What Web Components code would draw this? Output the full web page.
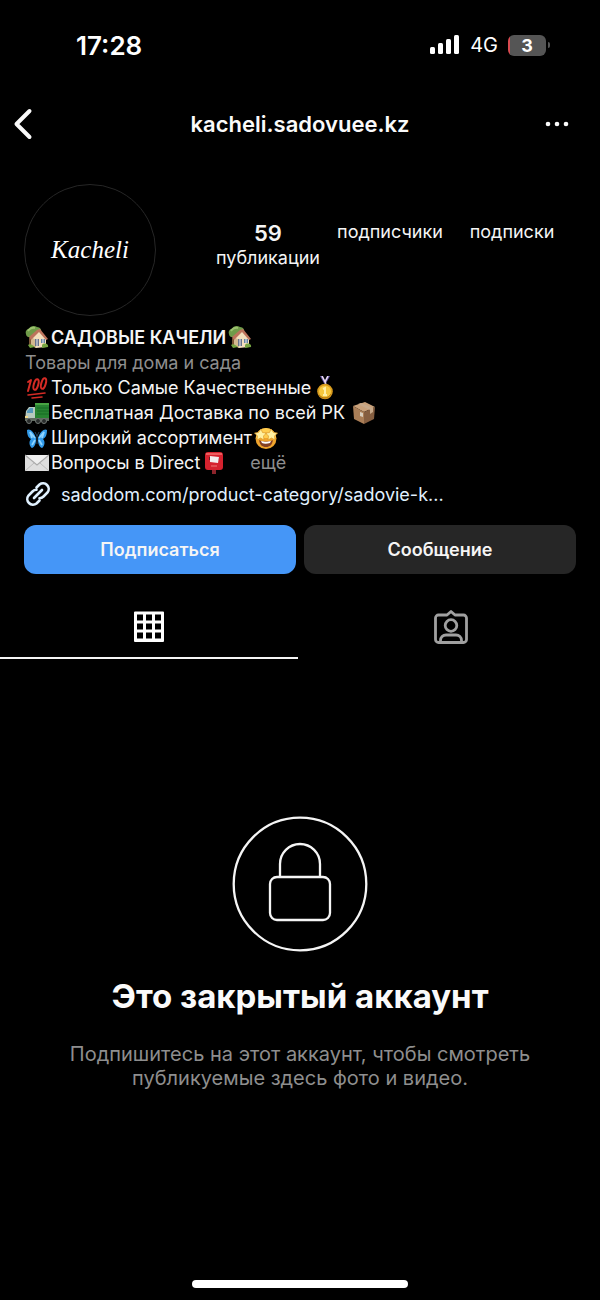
<!DOCTYPE html>
<html lang="ru">
<head>
<meta charset="utf-8">
<meta name="viewport" content="width=device-width, initial-scale=1">
<title>kacheli.sadovuee.kz</title>
<style>
  html { background: #000; }
  body { margin: 0; background: #000; color: #f5f5f5; font-family: Inter, "Noto Sans", sans-serif; font-size: 18px; line-height: 25px; }
</style>
</head>
<body>
<profile-screen></profile-screen>

<script>
const define = (name, html) => {
  const tpl = document.createElement('template');
  tpl.innerHTML = html;
  customElements.define(name, class extends HTMLElement {
    constructor() {
      super();
      this.attachShadow({ mode: 'open' }).append(tpl.content.cloneNode(true));
    }
  });
};

/* Emoji pictograms, each on a 24-unit square */
const EMOJI = {
  house: ['дом с садом', `
    <path d="M4 13h3v8H4z" fill="#7b5636"/>
    <path d="M1 9c-1-3 1-5 3-5 1-3 5-4 8-2 3 0 5 3 4 5 0 3-3 4-5 3-1 2-3 3-5 2-3 1-5-1-5-3z" fill="#6f9b49"/>
    <path d="M3 6c1-2 4-4 7-3" stroke="#9cc16e" stroke-width="2" fill="none"/>
    <path d="M6 12l8-6 7 7v9l-10 1-5-3z" fill="#f3dfbd"/>
    <path d="M6 12l5 3v8l-5-3z" fill="#d4b98f"/>
    <path d="M4 12l8-7 3-1 8 10-2 1-7-8-8 8z" fill="#bd735c"/>
    <path d="M10 14h4v7h-4z" fill="#68738b"/><path d="M16 14h4v4h-4z" fill="#6684a4"/>
    <path d="M12 14v7M18 14v4" stroke="#eee" stroke-width="1"/>
    <path d="M3 20c2-2 5 0 7 2l-5 1zM17 20c2-3 7-1 6 2l-6 1z" fill="#76a542"/>`],
  hundred: ['100', `
    <g fill="none" stroke="#d52b25" stroke-linecap="round" stroke-linejoin="round">
    <path d="M3 6l3-2-3 11" stroke-width="2"/>
    <ellipse cx="11" cy="8.500" rx="2.200" ry="5.500" transform="rotate(16 11 8.500)" stroke-width="2"/>
    <ellipse cx="18.500" cy="7.500" rx="2.200" ry="5.500" transform="rotate(16 18.500 7.500)" stroke-width="2"/>
    <path d="M3 19l17-2M7 22l10-1" stroke-width="1.600"/></g>`],
  medal: ['золотая медаль', `
    <path d="M7 0l5 9 5-9h-3l-2 4-2-4z" fill="#6a58ad"/><path d="M9 0l4 8M15 0l-3 6" stroke="#eee1ec" stroke-width="1.400"/>
    <circle cx="12" cy="15.500" r="7.800" fill="#d89b1e"/><circle cx="12" cy="15.500" r="6" fill="#f7c83e"/>
    <path d="M10 13l2-1v7M10 19h4" stroke="#fff0a6" stroke-width="2" fill="none"/>
    <path d="M6 19c3 4 9 4 12-1" stroke="#b77912" fill="none"/>`],
  truck: ['грузовик', `
    <path d="M10 2h14v16H10z" fill="#278331"/><path d="M10 2h14v2H10z" fill="#48a443"/>
    <path d="M12 7h12M12 10h12M12 13h12" stroke="#176a25"/>
    <path d="M1 10l3-4h6v13H0z" fill="#b7c9bf"/><path d="M2 10l3-3h3v5H2z" fill="#5598bc"/>
    <path d="M0 17h24v3H0z" fill="#5f6a60"/><path d="M0 15h3v2H0z" fill="#f0d78b"/>
    <g fill="#292d2c" stroke="#707672"><circle cx="4" cy="20" r="2.500"/><circle cx="13" cy="20" r="2.500"/><circle cx="19" cy="20" r="2.500"/></g>`],
  package: ['посылка', `
    <path d="M1 5l12-4 10 5-11 5z" fill="#c9a17a"/><path d="M1 5l11 6v12L2 18z" fill="#aa7e57"/>
    <path d="M12 11l11-5-1 12-10 5z" fill="#855e40"/><path d="M6 3l12 6v4l3-2V7L9 2z" fill="#c7a98a"/>
    <path d="M8 11l3 1v4l-3-1z" fill="#d8cdbc"/>`],
  butterfly: ['бабочка', `
    <path d="M11 12C9 5 4 2 2 4c0 6 2 8 4 9-3 3-1 8 1 9 3-1 4-5 4-8z" fill="#319ae9"/>
    <path d="M13 12c2-7 7-10 9-8 0 6-2 8-4 9 3 3 1 8-1 9-3-1-4-5-4-8z" fill="#319ae9"/>
    <path d="M10 12L5 6l2 6M14 12l5-6-2 6M10 14l-3 5M14 14l3 5" stroke="#8ed5ff" stroke-width="1.800" fill="none"/>
    <path d="M12 9v9M12 10l-2-4M12 10l2-4" stroke="#234560" stroke-width="1"/>`],
  star: ['восторг', `
    <circle cx="12" cy="12.500" r="10.500" fill="#f0a52d"/><path d="M2 12a10 10 0 0 1 20 0" fill="#ffce50"/>
    <path d="M7 3l1.500 3.500 4 .5-3 3 .5 4-3.500-2L3 14l.5-4-3-3 4-.5zM17 3l-1.500 3.500-4 .5 3 3-.5 4 3.500-2 3.500 2-.5-4 3-3-4-.5z" fill="#fff0a1" stroke="#dc9927" stroke-width=".7"/>
    <path d="M5 14c4 2 10 2 14 0-1 5-3 7-7 7s-6-2-7-7z" fill="#844023"/><path d="M7 15c4 1 6 1 10 0l-1 2c-3 1-6 1-8 0z" fill="#fff"/>`],
  letter: ['письмо', `
    <path d="M0 4h24v16H0z" fill="#dedede"/><path d="M0 4l12 10L24 4" fill="#efefef" stroke="#aaa" stroke-width="1.200"/>
    <path d="M0 20l9-8M24 20l-9-8" stroke="#bbb" stroke-width="1"/>`],
  postbox: ['почтовый ящик', `
    <path d="M10 17h4v6h-4z" fill="#8c242b"/><rect x="3" y="1" width="18" height="18" rx="3" fill="#d5222e"/>
    <path d="M4 3h16" stroke="#ed5c5d" stroke-width="2"/><path d="M7 6h10v3H7z" fill="#661c25"/>
    <path d="M8 5l9 1-1 6-8-1z" fill="#f3eeee"/><path d="M9 15h6" stroke="#ee7a78" stroke-width="1"/>`]
};

customElements.define('emoji-icon', class extends HTMLElement {
  constructor() {
    super();
    this.attachShadow({ mode: 'open' });
  }
  connectedCallback() {
    const [label, shapes] = EMOJI[this.getAttribute('name')];
    this.shadowRoot.innerHTML = `
      <style>:host{display:block;flex:none;width:24px;height:24px} svg{display:block}</style>
      <svg width="24" height="24" viewBox="0 0 24 24" role="img" aria-label="${label}">${shapes}</svg>`;
  }
});

define('status-bar', `
  <style>
    :host { display: flex; align-items: center; justify-content: space-between; height: 90px; padding: 0 50px 0 76px; color: #fff; }
    time { font-size: 26px; font-weight: 600; }
    .right { display: flex; align-items: center; gap: 10px; font-size: 20px; }
    .battery { display: flex; align-items: center; gap: 2px; }
    .level { width: 38px; height: 21px; border-radius: 6px; background: linear-gradient(90deg, #d84a50 2px, #555 2px); font-size: 18px; line-height: 21px; font-weight: 700; text-align: center; }
    .nub { width: 2px; height: 6px; border-radius: 0 2px 2px 0; background: #555; }
    svg { display: block; }
  </style>
  <time>17:28</time>
  <div class="right">
    <svg width="30" height="20" viewBox="0 0 30 20" fill="#fff" aria-label="Сигнал" role="img">
      <rect y="12" width="5" height="7" rx="1.500"/><rect x="8" y="8" width="5" height="11" rx="1.500"/>
      <rect x="16" y="4" width="5" height="15" rx="1.500"/><rect x="24" width="5" height="19" rx="1.500"/>
    </svg>
    <span>4G</span>
    <div class="battery"><div class="level">3</div><div class="nub"></div></div>
  </div>`);

define('nav-bar', `
  <style>
    :host { display: grid; grid-template-columns: 60px 1fr 60px; align-items: center; height: 68px; color: #fafafa; }
    h1 { margin: 0; font-size: 22px; line-height: 28px; font-weight: 600; text-align: center; }
    button { display: flex; align-items: center; height: 48px; padding: 0; border: 0; background: none; color: inherit; }
    .back { padding-left: 13px; }
    .more { justify-content: flex-end; padding-right: 30px; }
  </style>
  <button class="back" aria-label="Назад"><svg width="20" height="32" viewBox="0 0 20 32" fill="none" stroke="currentColor" stroke-width="4" stroke-linecap="round" stroke-linejoin="round"><path d="M16.500 3L3.500 16l13 13"/></svg></button>
  <h1><slot></slot></h1>
  <button class="more" aria-label="Ещё"><svg width="26" height="6" viewBox="0 0 26 6" fill="currentColor"><circle cx="4" cy="3" r="2.300"/><circle cx="13" cy="3" r="2.300"/><circle cx="22" cy="3" r="2.300"/></svg></button>`);

define('profile-avatar', `
  <style>
    :host { display: flex; flex: none; align-items: center; justify-content: center; box-sizing: border-box; width: 132px; height: 132px; border: 1px solid #262626; border-radius: 50%; color: #fff; font: italic 25px "Liberation Serif", serif; }
  </style>
  <span><slot></slot></span>`);

define('profile-stat', `
  <style>
    :host { display: block; text-align: center; }
    a { display: block; color: inherit; text-decoration: none; line-height: 24px; }
    ::slotted(b) { display: block; font-size: 22px; line-height: 26px; font-weight: 600; }
  </style>
  <a href="#"><slot name="count"></slot><slot></slot></a>`);

define('bio-line', `
  <style>
    :host { display: flex; align-items: center; gap: 2px; height: 25px; white-space: nowrap; }
    :host([heading]) { height: 26px; font-weight: 600; }
    :host([muted]) { color: #8e8e8e; }
  </style>
  <slot></slot>`);

define('profile-link', `
  <style>
    :host { display: block; padding-top: 6px; }
    a { display: flex; align-items: center; gap: 10px; color: #e0f1ff; text-decoration: none; }
    svg { flex: none; }
  </style>
  <a href="#"><svg width="26" height="26" viewBox="0 0 26 26" fill="none" stroke="currentColor" stroke-width="2.600" stroke-linecap="round">
    <path d="M9 17l8-8M11.500 6.500l3-3a5.700 5.700 0 0 1 8 8l-4 4a5.700 5.700 0 0 1-4 1.700M14.500 19.500l-3 3a5.700 5.700 0 0 1-8-8l4-4a5.700 5.700 0 0 1 4-1.700"/>
  </svg><span><slot></slot></span></a>`);

define('action-button', `
  <style>
    :host { display: block; }
    button { display: block; width: 100%; height: 49px; padding: 0; border: 0; border-radius: 12px; background: #262626; color: #f5f5f5; font: inherit; font-weight: 600; }
    :host([primary]) button { background: #4596f7; }
  </style>
  <button><slot></slot></button>`);

define('profile-tabs', `
  <style>
    :host { display: grid; grid-template-columns: 1fr 1fr; gap: 4px; margin-top: 19px; }
    button { display: flex; align-items: center; justify-content: center; box-sizing: border-box; height: 66px; padding: 3px 0 0; border: 0; border-bottom: 2px solid transparent; background: none; color: #a0a0a0; }
    button[aria-selected="true"] { border-color: #f5f5f5; color: #fff; }
  </style>
  <button role="tab" aria-selected="true" aria-label="Публикации">
    <svg width="32" height="32" viewBox="0 0 32 32"><path fill="currentColor" fill-rule="evenodd" d="M2 0.500h28a1 1 0 0 1 1 1v28.500a1 1 0 0 1-1 1h-28a1 1 0 0 1-1-1v-28.500a1 1 0 0 1 1-1zM4 3.500v6h6v-6zM13 3.500v6h6v-6zM22 3.500v6h6v-6zM4 12.500v6h6v-6zM13 12.500v6h6v-6zM22 12.500v6h6v-6zM4 21.500v6h6v-6zM13 21.500v6h6v-6zM22 21.500v6h6v-6z"/></svg>
  </button>
  <button role="tab" aria-selected="false" aria-label="Отметки">
    <svg width="34" height="34" viewBox="0 0 34 34" fill="none" stroke="currentColor" stroke-width="2.800" stroke-linejoin="round"><path d="M4.500 5H13l4-3.500L21 5h8.500a3 3 0 0 1 3 3v21.500a3 3 0 0 1-3 3h-25a3 3 0 0 1-3-3V8a3 3 0 0 1 3-3z"/><circle cx="17" cy="15.500" r="5.800"/><path d="M6.500 32v-1.500a5.500 5.500 0 0 1 5.500-5.500h10a5.500 5.500 0 0 1 5.500 5.500V32"/></svg>
  </button>`);

define('private-notice', `
  <style>
    :host { display: flex; flex-direction: column; align-items: center; padding: 157px 60px 40px; text-align: center; }
    h2 { margin: 24px 0 0; color: #fafafa; font-size: 33px; line-height: 40px; font-weight: 700; }
    p { max-width: 470px; margin: 26px 0 0; color: #8e8e8e; font-size: 20px; line-height: 24px; }
  </style>
  <svg width="136" height="136" viewBox="0 0 136 136" fill="none" stroke="#f5f5f5" stroke-width="2.300" aria-hidden="true"><circle cx="68" cy="68" r="66.300"/><rect x="38" y="61" width="60" height="43" rx="7"/><path d="M48 61V48a20 20 0 0 1 40 0v13"/></svg>
  <h2><slot name="title"></slot></h2>
  <p><slot></slot></p>`);

define('profile-screen', `
  <style>
    :host { display: flex; flex-direction: column; min-height: 100vh; }
    .profile { padding: 26px 24px 0; }
    .top { display: flex; margin-bottom: 8px; }
    .stats { flex: 1; display: grid; grid-template-columns: repeat(3, 1fr); padding: 36px 3px 0 51px; }
    .bio { padding-left: 1px; }
    .more { margin-left: 22px; color: #8e8e8e; text-decoration: none; }
    .wide { margin-left: 5px; }
    .actions { display: grid; grid-template-columns: 1fr 1fr; gap: 8px; margin-top: 18px; }
    .home { width: 36%; height: 8px; margin: auto auto 12px; border-radius: 4px; background: #fff; }
  </style>
  <status-bar></status-bar>
  <nav-bar>kacheli.sadovuee.kz</nav-bar>
  <main>
    <section class="profile">
      <div class="top">
        <profile-avatar>Kacheli</profile-avatar>
        <div class="stats">
          <profile-stat><b slot="count">59</b>публикации</profile-stat>
          <profile-stat>подписчики</profile-stat>
          <profile-stat>подписки</profile-stat>
        </div>
      </div>
      <div class="bio">
        <bio-line heading><emoji-icon name="house"></emoji-icon><span>САДОВЫЕ КАЧЕЛИ</span><emoji-icon name="house"></emoji-icon></bio-line>
        <bio-line muted><span>Товары для дома и сада</span></bio-line>
        <bio-line><emoji-icon name="hundred"></emoji-icon><span>Только Самые Качественные</span><emoji-icon name="medal"></emoji-icon></bio-line>
        <bio-line><emoji-icon name="truck"></emoji-icon><span>Бесплатная Доставка по всей РК</span><emoji-icon class="wide" name="package"></emoji-icon></bio-line>
        <bio-line><emoji-icon name="butterfly"></emoji-icon><span>Широкий ассортимент</span><emoji-icon name="star"></emoji-icon></bio-line>
        <bio-line><emoji-icon name="letter"></emoji-icon><span>Вопросы в Direct</span><emoji-icon name="postbox"></emoji-icon><a class="more" href="#">ещё</a></bio-line>
        <profile-link>sadodom.com/product-category/sadovie-k...</profile-link>
      </div>
      <div class="actions">
        <action-button primary>Подписаться</action-button>
        <action-button>Сообщение</action-button>
      </div>
    </section>
    <profile-tabs role="tablist"></profile-tabs>
    <private-notice><span slot="title">Это закрытый аккаунт</span>Подпишитесь на этот аккаунт, чтобы смотреть публикуемые здесь фото и видео.</private-notice>
  </main>
  <div class="home"></div>`);
</script>
</body>
</html>
